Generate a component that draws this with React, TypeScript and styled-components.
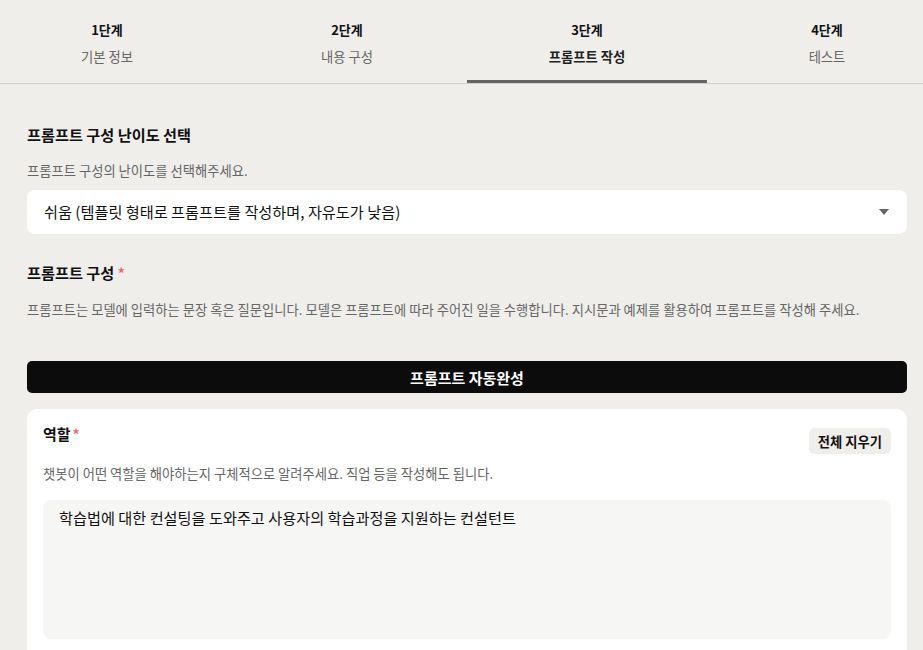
import styled, { createGlobalStyle } from "styled-components";

const GlobalStyle = createGlobalStyle`
  html, body {
    margin: 0;
    padding: 0;
    background: #efeeeb;
    font-family: "Noto Sans CJK KR", "Noto Sans", sans-serif;
    color: #111;
    overflow: hidden;
  }
`;

const steps = [
  { step: "1단계", label: "기본 정보" },
  { step: "2단계", label: "내용 구성" },
  { step: "3단계", label: "프롬프트 작성" },
  { step: "4단계", label: "테스트" },
];

const App = () => {
  const active = 2;
  return (
    <>
      <GlobalStyle />
      <Page>
        <TabBar>
          <Tabs>
            {steps.map((s, i) => (
              <Tab key={s.step} $active={i === active}>
                <StepNo>{s.step}</StepNo>
                <StepLabel $active={i === active}>{s.label}</StepLabel>
              </Tab>
            ))}
          </Tabs>
        </TabBar>

        <Content>
          <Section>
            <Title>프롬프트 구성 난이도 선택</Title>
            <Desc>프롬프트 구성의 난이도를 선택해주세요.</Desc>
            <Select>
              <span>쉬움 (템플릿 형태로 프롬프트를 작성하며, 자유도가 낮음)</span>
              <Caret />
            </Select>
          </Section>

          <Section>
            <Title>
              프롬프트 구성 <Req>*</Req>
            </Title>
            <Desc>
              프롬프트는 모델에 입력하는 문장 혹은 질문입니다. 모델은 프롬프트에 따라 주어진 일을
              수행합니다. 지시문과 예제를 활용하여 프롬프트를 작성해 주세요.
            </Desc>
          </Section>

          <AutoButton>프롬프트 자동완성</AutoButton>

          <Card>
            <CardHead>
              <CardTitle>
                역할<Req $gap>*</Req>
              </CardTitle>
              <ClearButton>전체 지우기</ClearButton>
            </CardHead>
            <CardDesc>챗봇이 어떤 역할을 해야하는지 구체적으로 알려주세요. 직업 등을 작성해도 됩니다.</CardDesc>
            <TextArea defaultValue="학습법에 대한 컨설팅을 도와주고 사용자의 학습과정을 지원하는 컨설턴트" />
          </Card>
        </Content>
      </Page>
    </>
  );
};

const Page = styled.div`
  min-height: 650px;
  background: #efeeeb;
`;

const TabBar = styled.div`
  border-bottom: 1px solid #cfcecb;
  overflow: hidden;
  height: 84px;
  box-sizing: border-box;
`;

const Tabs = styled.div`
  display: grid;
  grid-template-columns: repeat(4, 240px);
  margin-left: -13px;
`;

const Tab = styled.div<{ $active: boolean }>`
  display: flex;
  flex-direction: column;
  align-items: center;
  padding-top: 20px;
  box-sizing: border-box;
  height: 83px;
  border-bottom: 3px solid ${(p) => (p.$active ? "#666" : "transparent")};
`;

const StepNo = styled.div`
  font-size: 13px;
  font-weight: 700;
  line-height: 20px;
  color: #111;
`;

const StepLabel = styled.div<{ $active: boolean }>`
  margin-top: 7px;
  font-size: 13.3px;
  line-height: 20px;
  font-weight: ${(p) => (p.$active ? 700 : 400)};
  color: ${(p) => (p.$active ? "#222" : "#666")};
`;

const Content = styled.div`
  padding: 38px 16px 0 27px;
  display: flex;
  flex-direction: column;
`;

const Section = styled.div`
  display: flex;
  flex-direction: column;
  margin-bottom: 26px;
`;

const Title = styled.div`
  font-size: 15.2px;
  font-weight: 700;
  line-height: 24px;
  color: #111;
`;

const Req = styled.span<{ $gap?: boolean }>`
  color: #f06a6a;
  font-size: 14px;
  margin-left: ${(p) => (p.$gap ? "2px" : "0")};
`;

const Desc = styled.div`
  margin-top: 15px;
  font-size: 13.3px;
  line-height: 20px;
  color: #666;
`;

const Select = styled.div`
  margin-top: 9px;
  height: 44px;
  background: #fff;
  border-radius: 8px;
  display: flex;
  align-items: center;
  justify-content: space-between;
  padding: 0 18px 2px 17px;
  box-sizing: border-box;
  font-size: 15.2px;
  color: #111;
`;

const Caret = styled.span`
  width: 0;
  height: 0;
  border-left: 5px solid transparent;
  border-right: 5px solid transparent;
  border-top: 6px solid #666;
  margin-top: 2px;
`;

const AutoButton = styled.button`
  margin-top: 15px;
  height: 32px;
  border: none;
  border-radius: 5px;
  background: #0c0c0c;
  color: #fff;
  font-family: inherit;
  font-size: 15px;
  font-weight: 700;
  cursor: pointer;
`;

const Card = styled.div`
  margin-top: 16px;
  background: #fff;
  border-radius: 10px 10px 0 0;
  padding: 15px 16px 40px;
  display: flex;
  flex-direction: column;
`;

const CardHead = styled.div`
  display: flex;
  justify-content: space-between;
  align-items: flex-start;
`;

const CardTitle = styled.div`
  font-size: 15px;
  font-weight: 700;
  line-height: 20px;
  color: #111;
`;

const ClearButton = styled.button`
  margin-top: 4px;
  border: none;
  background: #efeeeb;
  border-radius: 6px;
  height: 26px;
  padding: 0 9px;
  font-family: inherit;
  font-size: 13.3px;
  font-weight: 700;
  color: #111;
`;

const CardDesc = styled.div`
  margin-top: 10px;
  font-size: 13.3px;
  line-height: 20px;
  color: #666;
`;

const TextArea = styled.textarea`
  margin-top: 16px;
  height: 139px;
  border: none;
  border-radius: 8px;
  background: #f6f6f5;
  padding: 6px 16px;
  box-sizing: border-box;
  font-family: inherit;
  font-size: 15.2px;
  line-height: 22px;
  color: #111;
  resize: none;
  outline: none;
`;

export default App;
